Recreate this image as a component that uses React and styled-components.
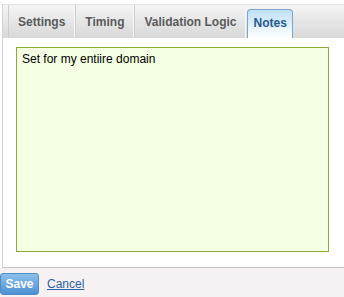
import React from 'react'
import styled, { createGlobalStyle } from 'styled-components'

const Global = createGlobalStyle`
  html, body { margin: 0; padding: 0; background: #ffffff; }
  body { font-family: "Liberation Sans", Arial, sans-serif; }
`

const tabs = ['Settings', 'Timing', 'Validation Logic', 'Notes']

export default function App() {
  return (
    <Page>
      <Global />
      <Panel>
        <TabStrip>
          {tabs.map(t => (
            <Tab key={t} active={t === 'Notes'}>{t}</Tab>
          ))}
        </TabStrip>
        <Body>
          <Notes defaultValue="Set for my entiire domain" />
        </Body>
      </Panel>
      <Footer>
        <SaveButton>Save</SaveButton>
        <CancelLink href="#">Cancel</CancelLink>
      </Footer>
    </Page>
  )
}

const Page = styled.div`
  width: 344px;
  height: 297px;
  display: flex;
  flex-direction: column;
  background: #ffffff;
  overflow: hidden;
`

const Panel = styled.div`
  margin-top: 4px;
  margin-left: 2px;
  height: 263px;
  border-left: 1px solid #d4d4d4;
  border-bottom: 1px solid #c4bfc0;
  display: flex;
  flex-direction: column;
`

const TabStrip = styled.div`
  height: 33px;
  display: flex;
  align-items: flex-end;
  padding-left: 5px;
  border-top: 1px solid #e4e4e4;
  background: linear-gradient(#f4f4f4, #d8d8d8);
`

const Tab = styled.div`
  height: ${p => (p.active ? '30px' : '33px')};
  padding: 0 ${p => (p.active ? '5px' : '9px')} ${p => (p.active ? '4px' : '0')};
  margin-left: ${p => (p.active ? '1px' : '0')};
  display: flex;
  align-items: center;
  font-size: 12px;
  font-weight: bold;
  color: ${p => (p.active ? '#245a8e' : '#5a5a5a')};
  box-sizing: border-box;
  border-left: 1px solid ${p => (p.active ? '#7aa6cc' : '#cdcdcd')};
  border-right: 1px solid ${p => (p.active ? '#7aa6cc' : '#f7f7f7')};
  border-top: ${p => (p.active ? '1px solid #7aa6cc' : 'none')};
  border-radius: ${p => (p.active ? '4px 4px 0 0' : '0')};
  background: ${p => (p.active ? 'linear-gradient(#bfdff4, #f4faff 80%, #ffffff)' : 'transparent')};
  margin-bottom: ${p => (p.active ? '-1px' : '0')};
`

const Body = styled.div`
  flex: 1;
  padding: 9px 15px 15px 13px;
  display: flex;
  background: #ffffff;
`

const Notes = styled.textarea`
  flex: 1;
  resize: none;
  margin: 0;
  padding: 4px 5px;
  border: 1px solid #8aab3a;
  background: #f5ffe3;
  font-family: "Liberation Sans", Arial, sans-serif;
  font-size: 12px;
  color: #000000;
  outline: none;
`

const Footer = styled.div`
  flex: 1;
  background: #f6f2f4;
  display: flex;
  align-items: center;
  gap: 8px;
  padding-top: 2px;
`

const SaveButton = styled.button`
  height: 22px;
  width: 39px;
  padding: 0;
  border: 1px solid #4f8cc8;
  border-radius: 3px;
  background: linear-gradient(#8ec0ec, #4d90d4);
  color: #ffffff;
  font-family: "Liberation Sans", Arial, sans-serif;
  font-weight: bold;
  font-size: 12px;
`

const CancelLink = styled.a`
  font-size: 12px;
  color: #2a5fa5;
  text-decoration: underline;
`
